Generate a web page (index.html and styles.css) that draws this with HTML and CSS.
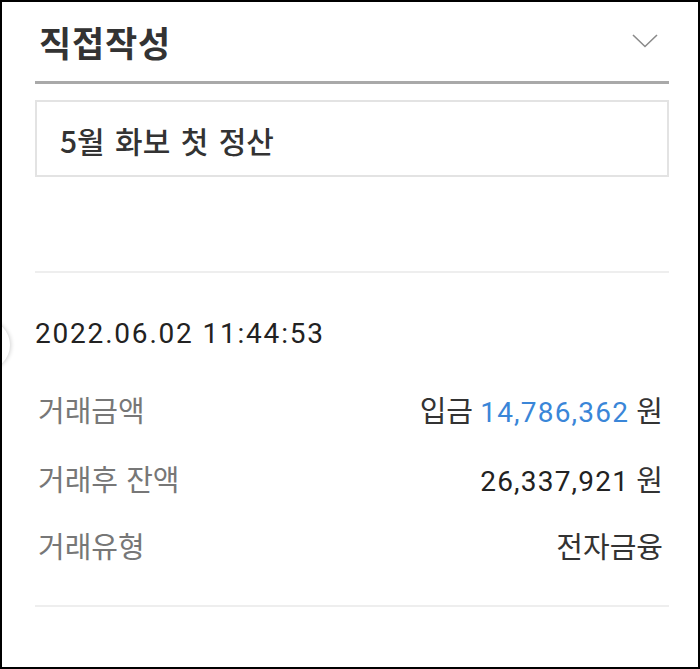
FILE: index.html
```html
<!DOCTYPE html>
<html lang="ko">
<head>
  <meta charset="UTF-8">
  <meta name="viewport" content="width=device-width, initial-scale=1.0">
  <title>거래내역</title>
  <link rel="stylesheet" href="styles.css">
</head>
<body>
  <div class="frame">
    <div class="float-btn"></div>
    <div class="panel">
      <div class="memo-head">
        <h1 class="memo-title">직접작성</h1>
        <svg class="chevron" width="26" height="14" viewBox="0 0 26 14">
          <path d="M1 1 L13 12.5 L25 1" fill="none" stroke="#8a8a8a" stroke-width="1.6"/>
        </svg>
      </div>
      <div class="line-thick"></div>
      <div class="memo-box">5월 화보 첫 정산</div>

      <div class="line-thin spaced"></div>

      <div class="date">2022.06.02 11:44:53</div>

      <div class="rows">
        <div class="row">
          <span class="label">거래금액</span>
          <span class="value">입금 <span class="num blue">14,786,362</span> 원</span>
        </div>
        <div class="row">
          <span class="label">거래후 잔액</span>
          <span class="value"><span class="num">26,337,921</span> 원</span>
        </div>
        <div class="row">
          <span class="label">거래유형</span>
          <span class="value">전자금융</span>
        </div>
      </div>

      <div class="line-thin"></div>
    </div>
  </div>
</body>
</html>
```

FILE: styles.css
```css
* {
  box-sizing: border-box;
}
body {
  margin: 0;
  background-color: #fff;
  font-family: Roboto, "Noto Sans CJK KR", sans-serif;
  color: #222;
}
.frame {
  position: relative;
  width: 700px;
  height: 669px;
  border: 2px solid #000;
  overflow: hidden;
  background-color: #fff;
}
/* 화면 왼쪽에 걸쳐 있는 둥근 버튼 */
.float-btn {
  position: absolute;
  left: -42px;
  top: 318px;
  width: 50px;
  height: 50px;
  border-radius: 50%;
  background-color: #fff;
  box-shadow: 1px 0 4px rgba(0, 0, 0, 0.18);
}
.panel {
  padding: 0 29px 0 33px;
}
.memo-head {
  height: 79px;
  display: flex;
  align-items: center;
  justify-content: space-between;
}
.memo-title {
  margin: 0;
  padding-left: 4px;
  font-family: "Noto Sans CJK KR", sans-serif;
  font-size: 35px;
  font-weight: 700;
  color: #333;
  letter-spacing: 0.8px;
}
.chevron {
  margin-right: 11px;
  margin-top: -2px;
}
.line-thick {
  height: 3px;
  background-color: #a9a9a9;
}
.memo-box {
  margin-top: 16px;
  height: 77px;
  border: 2px solid #e3e3e3;
  padding-left: 23px;
  display: flex;
  align-items: center;
  font-family: "Noto Sans CJK KR", sans-serif;
  font-size: 30px;
  font-weight: 500;
  color: #333;
  padding-top: 2px;
  word-spacing: 2px;
}
.line-thin {
  height: 2px;
  background-color: #eeeeee;
}
.line-thin.spaced {
  margin-top: 94px;
}
.date {
  margin-top: 41px;
  height: 40px;
  line-height: 40px;
  font-size: 28px;
  letter-spacing: 1.8px;
  color: #222;
}
.rows {
  margin-top: 20px;
  margin-bottom: 28px;
  padding: 0 6px 0 3px;
}
.row {
  height: 69px;
  display: flex;
  align-items: center;
  justify-content: space-between;
  font-size: 29px;
}
.row:nth-child(3) {
  height: 65px;
}
.label {
  color: #777;
  font-family: "Noto Sans CJK KR", sans-serif;
}
.value {
  color: #333;
}
.num {
  font-size: 28px;
  letter-spacing: 1.2px;
  color: #222;
}
.num.blue {
  color: #3a86d8;
}
```
